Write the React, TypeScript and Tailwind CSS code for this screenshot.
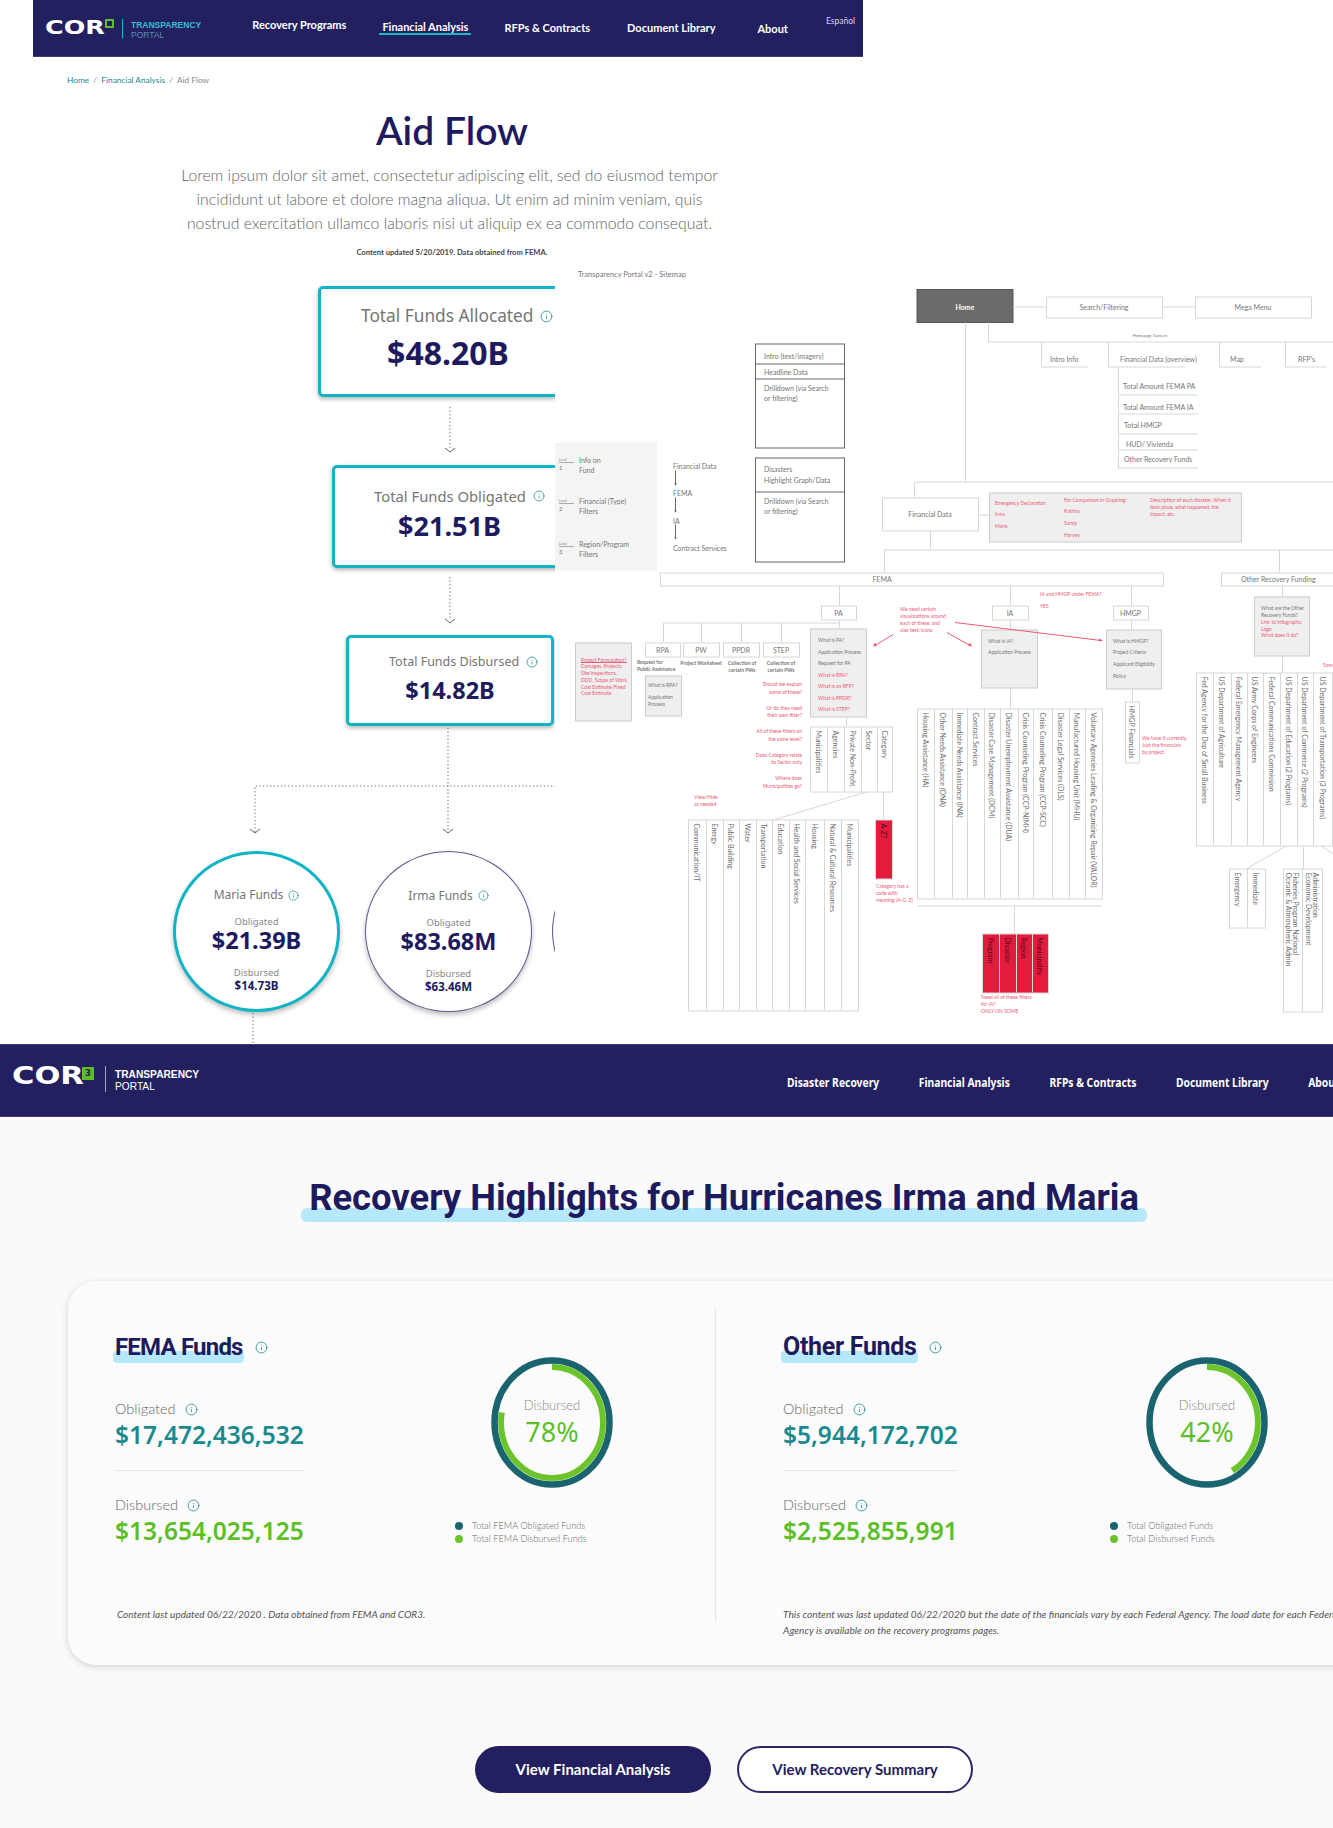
import type { ReactNode } from "react";
import { Info } from "lucide-react";

const LINE = "#d8d8d8";
const TXT = "#757575";
const PINK = "#ea5a76";
const RED = "#e31b3c";

function InfoIcon({ size = 13 }: { size?: number }) {
  return <Info size={size} strokeWidth={1.5} className="shrink-0 text-[#1b8a8f]" />;
}

function Logo({ small }: { small?: boolean }) {
  if (small) {
    return (
      <div className="ml-[12px] flex items-start">
        <span className="mt-[19px] w-[70px] origin-left scale-x-[1.22] font-['DejaVu_Sans'] text-[25px] leading-[24px] font-bold text-white">COR</span>
        <span className="mt-[22px] flex h-[13px] w-[12px] items-center justify-center bg-[#5cbf28] font-['DejaVu_Sans'] text-[9px] font-bold text-[#23205f]">3</span>
        <span className="mt-[21px] ml-[11px] h-[26px] w-px bg-white/60" />
        <span className="mt-[24px] ml-[9px] font-['Liberation_Sans'] text-[10.2px] leading-[12px] text-white">
          <b className="font-semibold">TRANSPARENCY</b>
          <br />
          <span className="font-light">PORTAL</span>
        </span>
      </div>
    );
  }
  return (
    <div className="ml-[12px] flex items-start">
      <span className="mt-[17px] w-[58px] origin-left scale-x-[1.27] font-['DejaVu_Sans'] text-[20px] leading-[20px] font-bold text-white">COR</span>
      <span className="mt-[19px] ml-[2px] h-[9px] w-[9px] border-2 border-[#5cbf28]" />
      <span className="mt-[19px] ml-[8px] h-[19px] w-px bg-[#1fb7c6]" />
      <span className="mt-[20px] ml-[8px] font-['Liberation_Sans'] text-[8.5px] leading-[10px] text-[#35c0d0]">
        <b className="font-bold">TRANSPARENCY</b>
        <br />
        <span className="font-light text-[#5b8fb0]">PORTAL</span>
      </span>
    </div>
  );
}

function TopHeader() {
  return (
    <header className="relative ml-[33px] flex h-[57px] w-[830px] border-b border-[#3f3c78] bg-[#23205f] font-['Lato',sans-serif] text-[11px] font-bold whitespace-nowrap text-white">
      <Logo />
      <nav className="flex">
        <a className="mt-[17px] ml-[51px]">Recovery Programs</a>
        <a className="mt-[19px] ml-[33px] h-[16px] border-b-2 border-[#1fb7c6] px-[3px]">Financial Analysis</a>
        <a className="mt-[20px] ml-[33px]">RFPs &amp; Contracts</a>
        <a className="mt-[20px] ml-[37px]">Document Library</a>
        <a className="mt-[21px] ml-[42px]">About</a>
        <a className="mt-[15px] ml-[38px] text-[8.5px] font-normal text-[#d5d5e4]">Español</a>
      </nav>
    </header>
  );
}

function Intro() {
  return (
    <div className="ml-[33px] h-[205px] w-[838px] pt-[17px] font-['Lato',sans-serif]">
      <p className="ml-[34px] h-[12px] text-[8.3px] leading-[12px] text-[#1b8a8f]">
        Home <span className="text-[#999]">&nbsp;/&nbsp;</span> Financial Analysis <span className="text-[#999]">&nbsp;/&nbsp;</span> <span className="text-[#888]">Aid Flow</span>
      </p>
      <h1 className="mt-[20px] text-center text-[39px] leading-[48px] font-semibold text-[#1e1a5e]">Aid Flow</h1>
      <p className="mt-[9px] pr-[5px] text-center text-[15.8px] leading-[24px] font-light text-[#5f5f5f]">
        Lorem ipsum dolor sit amet, consectetur adipiscing elit, sed do eiusmod tempor
        <br />
        incididunt ut labore et dolore magna aliqua. Ut enim ad minim veniam, quis
        <br />
        nostrud exercitation ullamco laboris nisi ut aliquip ex ea commodo consequat.
      </p>
      <p className="mt-[11px] text-center text-[7.6px] leading-[12px] font-bold text-[#444]">Content updated 5/20/2019. Data obtained from FEMA.</p>
    </div>
  );
}

function Dotted({ h, x }: { h: number; x: number }) {
  // dotted connector with the little chevron on the end
  return (
    <svg width="555" height={h} className="block shrink-0">
      <line x1={x} y1="0" x2={x} y2={h - 5} stroke="#666" strokeWidth="1" strokeDasharray="1.2 2.4" />
      <path d={`M${x - 5} ${h - 5}L${x} ${h - 1}L${x + 5} ${h - 5}`} fill="none" stroke="#666" strokeWidth="1" />
    </svg>
  );
}

function Branch() {
  return (
    <svg width="555" height="123" className="block shrink-0">
      <g fill="none" stroke="#666" strokeWidth="1">
        <path d="M448 0V104M255 104V58H555" strokeDasharray="1.2 2.4" />
        <path d="M443 101L448 105L453 101M250 101L255 105L260 101" />
      </g>
    </svg>
  );
}

function FundCard({ title, value, box, titleCls, valueCls, row, icon }: { title: string; value: string; box: string; titleCls: string; valueCls: string; row: string; icon: number }) {
  return (
    <div className={`flex shrink-0 flex-col rounded-[5px] border-[3px] border-[#0fb5c4] bg-white shadow-[0_2px_4px_rgba(0,0,0,0.3)] ${box}`}>
      <div className={`flex items-center gap-[7px] ${row}`}>
        <span className={`font-['Noto_Sans',sans-serif] whitespace-nowrap text-[#757575] ${titleCls}`}>{title}</span>
        <InfoIcon size={icon} />
      </div>
      <div className={`text-center font-['Noto_Sans',sans-serif] font-bold text-[#1e1a5e] ${valueCls}`}>{value}</div>
    </div>
  );
}

function Circle({ name, ob, dis, ring }: { name: string; ob: string; dis: string; ring: string }) {
  return (
    <div className={`flex h-[161px] w-[167px] shrink-0 flex-col items-center rounded-[50%] bg-white font-['Noto_Sans',sans-serif] shadow-[0_3px_5px_rgba(0,0,0,0.25)] ${ring}`}>
      <div className="flex h-[16px] items-center gap-[5px] text-[12px] leading-[16px] text-[#757575]">
        {name} <InfoIcon size={11} />
      </div>
      <div className="mt-[13px] text-[9.5px] leading-[12px] text-[#888]">Obligated</div>
      <div className="text-[23.5px] leading-[24px] font-bold text-[#1e1a5e]">{ob}</div>
      <div className="mt-[15px] text-[9.5px] leading-[12px] text-[#888]">Disbursed</div>
      <div className="text-[11.5px] leading-[13px] font-bold text-[#1e1a5e]">{dis}</div>
    </div>
  );
}

function AidFlow() {
  return (
    <div className="flex h-[782px] w-[555px] shrink-0 flex-col overflow-hidden pt-[24px]">
      <FundCard title="Total Funds Allocated" value="$48.20B" box="ml-[318px] h-[111px] w-[264px]" row="mt-[15px] ml-[40px]" titleCls="text-[17.3px] leading-[24px]" valueCls="mt-[5px] pr-[4px] text-[32px] leading-[40px]" icon={13} />
      <div className="h-[10px] shrink-0" />
      <Dotted h={46} x={450} />
      <div className="h-[12px] shrink-0" />
      <FundCard title="Total Funds Obligated" value="$21.51B" box="ml-[332px] h-[103px] w-[236px]" row="mt-[17px] ml-[39px]" titleCls="text-[14.8px] leading-[22px]" valueCls="mt-[2px] pr-[1px] text-[27px] leading-[34px]" icon={12} />
      <div className="h-[9px] shrink-0" />
      <Dotted h={47} x={450} />
      <div className="h-[11px] shrink-0" />
      <FundCard title="Total Funds Disbursed" value="$14.82B" box="ml-[346px] h-[91px] w-[208px]" row="mt-[15px] ml-[40px]" titleCls="text-[12.5px] leading-[18px]" valueCls="mt-[4px] text-[23.5px] leading-[30px]" icon={12} />
      <div className="h-[2px] shrink-0" />
      <Branch />
      <div className="ml-[173px] flex gap-[25px]">
        <Circle name="Maria Funds" ob="$21.39B" dis="$14.73B" ring="border-[3.5px] border-[#0fb5c4] pt-[33px]" />
        <Circle name="Irma Funds" ob="$83.68M" dis="$63.46M" ring="border border-[#5a5590] pt-[35.5px]" />
        <div className="ml-[-5px] h-[161px] w-[167px] shrink-0 rounded-[50%] border border-[#5a5590]" />
      </div>
      <svg width="555" height="32" className="block shrink-0">
        <line x1="253" y1="1" x2="253" y2="32" stroke="#666" strokeDasharray="1.2 2.4" />
      </svg>
    </div>
  );
}

/* sitemap drawing helpers, all in page coordinates */
function T({ x, y, s = 7, c = TXT, a, w, children }: { x: number; y: number; s?: number; c?: string; a?: "middle" | "end"; w?: number; children: string }) {
  return (
    <text x={x} y={y} fontSize={s} fill={c} textAnchor={a} fontWeight={w} dominantBaseline="central">
      {children}
    </text>
  );
}

function L({ d, c = LINE }: { d: string; c?: string }) {
  return <path d={d} fill="none" stroke={c} strokeWidth="1" />;
}

function Box({ x, y, x2, y2, fill = "#fff", c = LINE }: { x: number; y: number; x2: number; y2: number; fill?: string; c?: string }) {
  return <rect x={x + 0.5} y={y + 0.5} width={x2 - x} height={y2 - y} fill={fill} stroke={c} strokeWidth="1" />;
}

function Lines({ x, ys, c = TXT, s = 5, w }: { x: number; ys: [number, string][]; c?: string; s?: number; w?: number }) {
  return (
    <>
      {ys.map(([y, t]) => (
        <T key={y} x={x} y={y} s={s} c={c} w={w}>
          {t}
        </T>
      ))}
    </>
  );
}

function VTable({ cols, y, y2, items, fill = "#fff", c = "#6e6e6e", s = 7 }: { cols: number[]; y: number; y2: number; items: (string | string[])[]; fill?: string; c?: string; s?: number }) {
  return (
    <g>
      <Box x={cols[0]} y={y} x2={cols[cols.length - 1]} y2={y2} fill={fill} />
      {cols.slice(1, -1).map((cx) => (
        <L key={cx} d={`M${cx + 0.5} ${y}V${y2}`} />
      ))}
      {items.map((it, i) => {
        const mid = (cols[i] + cols[i + 1]) / 2;
        const parts = Array.isArray(it) ? it : [it];
        return parts.map((t, k) => {
          const cx = mid + (k - (parts.length - 1) / 2) * 7;
          return (
            <text key={t} x={cx} y={y + 4} fontSize={s} fill={c} dominantBaseline="central" transform={`rotate(90 ${cx} ${y + 4})`}>
              {t}
            </text>
          );
        });
      })}
    </g>
  );
}

function CenterBox({ x, y, x2, y2, t, s = 7 }: { x: number; y: number; x2: number; y2: number; t: string; s?: number }) {
  return (
    <g>
      <Box x={x} y={y} x2={x2} y2={y2} />
      <T x={(x + x2) / 2} y={(y + y2) / 2} a="middle" s={s}>
        {t}
      </T>
    </g>
  );
}

function Sitemap() {
  return (
    <svg viewBox="555 261.5 778 782" width="778" height="782" className="block shrink-0 bg-white font-['Lato',sans-serif]">
      <T x={578} y={274} s={7.5}>Transparency Portal v2 - Sitemap</T>

      {/* level key */}
      <rect x="555" y="442" width="102" height="128" fill="#f4f4f4" />
      {[
        [459, "1", "Info on", "Fund"],
        [500, "2", "Financial (Type)", "Filters"],
        [543, "3", "Region/Program", "Filters"],
      ].map(([y, n, a, b]) => (
        <g key={n as string}>
          <T x={559} y={y as number} s={3.5}>Level</T>
          <L d={`M559 ${(y as number) + 3}H574`} c="#aaa" />
          <T x={559} y={(y as number) + 8} s={6}>{n as string}</T>
          <T x={579} y={y as number}>{a as string}</T>
          <T x={579} y={(y as number) + 10}>{b as string}</T>
        </g>
      ))}

      {/* flow list */}
      <T x={673} y={465}>Financial Data</T>
      <T x={673} y={492}>FEMA</T>
      <T x={673} y={520}>IA</T>
      <T x={673} y={547}>Contract Services</T>
      {[470, 497, 524].map((y) => (
        <g key={y}>
          <L d={`M675.5 ${y}V${y + 14}`} c="#666" />
          <path d={`M674 ${y + 13}h3l-1.5 2z`} fill="#666" />
        </g>
      ))}

      {/* wire boxes */}
      <Box x={755} y={343} x2={844} y2={447} c="#666" />
      <L d="M755 363.5H844M755 378.5H844" c="#666" />
      <Lines x={764} s={7} ys={[[355, "Intro (text/imagery)"], [371, "Headline Data"], [387, "Drilldown (via Search"], [397, "or filtering)"]]} />
      <Box x={755} y={457} x2={844} y2={561} c="#666" />
      <L d="M755 491.5H844" c="#666" />
      <Lines x={764} s={7} ys={[[468, "Disasters"], [479, "Highlight Graph/Data"], [500, "Drilldown (via Search"], [510, "or filtering)"]]} />

      {/* home row */}
      <rect x="917" y="289" width="96" height="33" fill="#6b6b6b" stroke="#555" />
      <T x={965} y={306} a="middle" c="#fff" w={700}>Home</T>
      <L d="M1013 306.5H1046M1162 306.5H1195M965.5 322V481M914.5 497V481.5H1333M988.5 322V341.5H1333" />
      <CenterBox x={1046} y={296} x2={1162} y2={317} t="Search/Filtering" />
      <CenterBox x={1195} y={296} x2={1311} y2={317} t="Mega Menu" />
      <T x={1150} y={335} a="middle" s={4}>Homepage Content</T>

      <L d="M1041.5 341V366.5H1088M1108.5 341V366.5H1185M1219.5 341V366.5H1261M1285.5 341V366.5H1327" />
      <T x={1050} y={358}>Intro Info</T>
      <T x={1120} y={358}>Financial Data (overview)</T>
      <T x={1230} y={358}>Map</T>
      <T x={1298} y={358}>RFP's</T>
      <L d="M1118.5 366V467.5H1198M1118 394.5H1198M1118 413.5H1198M1118 433.5H1198M1118 449.5H1198" />
      <T x={1123} y={385}>Total Amount FEMA PA</T>
      <T x={1123} y={406}>Total Amount FEMA IA</T>
      <T x={1124} y={424}>Total HMGP</T>
      <T x={1126} y={443}>HUD/ Vivienda</T>
      <T x={1124} y={458}>Other Recovery Funds</T>

      {/* financial data */}
      <CenterBox x={882} y={497} x2={978} y2={530} t="Financial Data" />
      <L d="M978 514.5H989M930.5 530V549.5M884.5 572V549.5H1333M1279.5 549V572" />
      <Box x={989} y={492} x2={1241} y2={541} fill="#efefef" c="#ccc" />
      <Lines x={995} c={PINK} ys={[[502, "Emergency Declaration"], [513, "Irma"], [525, "Maria"]]} />
      <Lines x={1064} c={PINK} ys={[[499, "For Comparison in Graphing:"], [510, "Katrina"], [522, "Sandy"], [534, "Harvey"]]} />
      <Lines x={1150} c={PINK} ys={[[499, "Description of each disaster, When it"], [506, "took place, what happened, the"], [513, "impact, etc."]]} />

      {/* FEMA */}
      <Box x={660} y={572} x2={1163} y2={585} />
      <T x={882} y={578} a="middle">FEMA</T>
      <Box x={1221} y={572} x2={1345} y2={585} />
      <T x={1241} y={578}>Other Recovery Funding</T>

      {/* PA */}
      <L d="M839.5 585V628M663.5 642V622.5H839M701.5 622V642M741.5 622V642M781.5 622V642" />
      <CenterBox x={821} y={605} x2={856} y2={619} t="PA" />
      <CenterBox x={645} y={642} x2={680} y2={656} t="RPA" />
      <CenterBox x={683} y={642} x2={719} y2={656} t="PW" />
      <CenterBox x={723} y={642} x2={759} y2={656} t="PPDR" />
      <CenterBox x={763} y={642} x2={799} y2={656} t="STEP" />
      <Lines x={637} s={5} w={700} ys={[[661, "Request for"], [668, "Public Assistance"]]} />
      <T x={701} y={662} s={5} a="middle" w={700}>Project Worksheet</T>
      <T x={742} y={662} s={5} a="middle" w={700}>Collection of</T>
      <T x={742} y={669} s={5} a="middle" w={700}>certain PWs</T>
      <T x={781} y={662} s={5} a="middle" w={700}>Collection of</T>
      <T x={781} y={669} s={5} a="middle" w={700}>certain PWs</T>
      <Box x={645} y={675} x2={681} y2={715} fill="#efefef" c="#ccc" />
      <Lines x={648} ys={[[684, "What is RPA?"], [696, "Application"], [703, "Process"]]} />
      <Box x={575} y={642} x2={631} y2={720} fill="#efefef" c="#ccc" />
      <Lines x={581} c={PINK} ys={[[659, "Project Formulation?"], [665, "Damages, Projects,"], [672, "Site Inspections,"], [679, "DDD, Scope of Work,"], [686, "Cost Estimate/Fixed"], [692, "Cost Estimate"]]} />
      <L d="M581 662H627" c={PINK} />
      <Box x={810} y={628} x2={866} y2={716} fill="#efefef" c="#ccc" />
      <Lines x={818} ys={[[639, "What is PA?"], [651, "Application Process"], [662, "Request for PA"]]} />
      <Lines x={818} c={PINK} ys={[[674, "What is RPA?"], [685, "What is an RFP?"], [697, "What is PPDR?"], [708, "What is STEP?"]]} />
      {[
        [683, "Should we explain"], [691, "some of these?"], [707, "Or do they need"], [714, "their own filter?"], [730, "All of these filters on"],
        [738, "the same level?"], [754, "Does Category relate"], [761, "to Sector only"], [777, "Where does"], [785, "Municipalities go?"],
      ].map(([y, t]) => (
        <T key={y as number} x={802} y={y as number} s={5} c={PINK} a="end">{t as string}</T>
      ))}
      <L d="M846.5 716V726M868 791L775 819M883.5 791V819" />
      <VTable cols={[810, 827, 844, 861, 877, 892]} y={726} y2={791} items={["Municipalities", "Agencies", "Private Non-Profit", "Sector", "Category"]} />
      <VTable cols={[688, 706, 723, 739, 756, 772, 789, 805, 824, 841, 858]} y={819} y2={1010} items={["Communication/IT", "Energy", "Public Building", "Water", "Transportation", "Education", "Health and Social Services", "Housing", "Natural & Cultural Resources", "Municipalities"]} />
      <VTable cols={[875, 892]} y={819} y2={878} fill={RED} c="#4a0d1a" items={["A-Z?"]} />
      <Lines x={876} c={PINK} ys={[[885, "Category has a"], [892, "code with"], [899, "meaning (A-G, Z)"]]} />
      <Lines x={694} c={PINK} ys={[[796, "View/Hide"], [803, "as needed"]]} />
      <Lines x={900} c={PINK} ys={[[608, "We need certain"], [615, "visualizations around"], [622, "each of these, and"], [629, "also text/icons."]]} />

      {/* IA */}
      <L d="M1010.5 585V708M1014.5 905V933M918 905.5H1102" />
      <CenterBox x={992} y={605} x2={1028} y2={619} t="IA" />
      <Box x={981} y={629} x2={1037} y2={687} fill="#efefef" c="#ccc" />
      <Lines x={988} ys={[[640, "What is IA?"], [651, "Application Process"]]} />
      <Lines x={1040} c={PINK} ys={[[593, "IA and HMGP under FEMA?"], [605, "YES"]]} />
      <VTable cols={[917, 934, 952, 967, 984, 1000, 1018, 1033, 1052, 1069, 1085, 1102]} y={708} y2={898} items={["Housing Assistance (HA)", "Other Needs Assistance (ONA)", "Immediate Needs Assistance (INA)", "Contract Services", "Disaster Case Management (DCM)", "Disaster Unemployment Assistance (DUA)", "Crisis Counseling Program (CCP-NIMH)", "Crisis Counseling Program (CCP-SCC)", "Disaster Legal Services (DLS)", "Manufactured Housing Unit (MHU)", "Voluntary Agencies Leading & Organizing Repair (VALOR)"]} />
      <VTable cols={[982, 999, 1016, 1032, 1048]} y={933} y2={992} fill={RED} c="#4a0d1a" items={["Program", "Disaster", "Region", "Municipality"]} />
      <Lines x={981} c={PINK} ys={[[996, "Need all of these filters"], [1003, "for IA?"], [1010, "ONLY ON SOME"]]} />

      {/* HMGP */}
      <L d="M1131.5 585V629M1132.5 688V701" />
      <CenterBox x={1113} y={605} x2={1148} y2={619} t="HMGP" />
      <Box x={1106} y={629} x2={1161} y2={688} fill="#efefef" c="#ccc" />
      <Lines x={1113} ys={[[640, "What is HMGP?"], [651, "Project Criteria"], [663, "Applicant Eligibility"], [675, "Policy"]]} />
      <VTable cols={[1125, 1139]} y={701} y2={762} items={["HMGP Financials"]} />
      <Lines x={1142} c={PINK} ys={[[737, "We have it currently."], [744, "Just the financials"], [751, "by project."]]} />

      {/* other recovery */}
      <L d="M1282.5 585V596M1282.5 655V672M1287 845L1247 868M1303.5 845V868M1320 845L1333 853" />
      <Box x={1254} y={596} x2={1309} y2={655} fill="#efefef" c="#ccc" />
      <Lines x={1261} ys={[[607, "What are the Other"], [614, "Recovery Funds?"]]} />
      <Lines x={1261} c={PINK} ys={[[621, "Link to Infographic"], [628, "Logo"], [634, "What does it do?"]]} />
      <T x={1323} y={664} s={5} c={PINK}>Some</T>
      <VTable cols={[1196, 1213, 1231, 1247, 1263, 1280, 1297, 1313, 1332, 1349]} y={672} y2={845} items={["Fed Agency for the Dep of Small Business", "US Department of Agriculture", "Federal Emergency Management Agency", "US Army Corps of Engineers", "Federal Communications Commission", "US Department of Education (2 Programs)", "US Department of Commerce (2 Programs)", "US Department of Transportation (3 Programs)", "Spacer"]} />
      <VTable cols={[1229, 1247, 1265]} y={868} y2={927} items={["Emergency", "Immediate"]} />
      <VTable cols={[1283, 1302, 1322]} y={868} y2={1011} items={[["Oceanic & Atmospheric Admin", "Fisheries Program National"], ["Economic Development", "Administration"]]} />

      {/* pink arrows lie over the boxes */}
      <L d="M893 634L875 645M947 632L970 645M955 622L1101 640" c={PINK} />
      <path d="M873 646l4-1l-2-3zM972 646l-4-1l2-3zM1103 640l-4-2l0 3z" fill={PINK} />
    </svg>
  );
}

function BottomHeader() {
  return (
    <header className="flex h-[73px] w-[1448px] border-y border-[#3f3c78] bg-[#23205f]">
      <Logo small />
      <nav className="mt-[30px] ml-[588px] flex origin-left scale-x-[0.86] gap-[46px] font-['Noto_Sans',sans-serif] text-[12px] leading-[16px] font-bold whitespace-nowrap text-white">
        <a>Disaster Recovery</a>
        <a>Financial Analysis</a>
        <a>RFPs &amp; Contracts</a>
        <a>Document Library</a>
        <a>About</a>
      </nav>
    </header>
  );
}

function Donut({ pct }: { pct: number }) {
  return (
    <div className="relative h-[131px] w-[122px] shrink-0">
      <svg width="122" height="131" viewBox="0 0 122 131" className="block">
        <ellipse cx="61" cy="65.5" rx="57.5" ry="62" fill="none" stroke="#1a6470" strokeWidth="6.5" />
        <path d="M61 10A51 55.5 0 1 1 61 121A51 55.5 0 1 1 61 10" pathLength={100} strokeDasharray={`${pct} 100`} fill="none" stroke="#6cc42c" strokeWidth="6" />
      </svg>
      <div className="absolute inset-0 flex flex-col items-center pt-[39px]">
        <span className="font-['Lato',sans-serif] text-[13px] leading-[18px] font-light text-[#888]">Disbursed</span>
        <span className="font-['Noto_Sans',sans-serif] text-[27px] leading-[36px] text-[#5cbf28]">{pct}%</span>
      </div>
    </div>
  );
}

function Stat({ label, value, color }: { label: string; value: string; color: string }) {
  return (
    <>
      <div className="flex h-[24px] items-center gap-[9px] font-['Lato',sans-serif] text-[14.5px] font-light text-[#666]">
        {label}
        <InfoIcon size={13} />
      </div>
      <div className={`mt-[-2px] font-['Noto_Sans',sans-serif] text-[24.5px] leading-[32px] font-semibold whitespace-nowrap ${color}`}>{value}</div>
    </>
  );
}

function FundsPanel({ title, titleCls, ob, dis, pct, leftW, legend, legendMl, donutMl, note, noteCls, panel }: { title: string; titleCls: string; ob: string; dis: string; pct: number; leftW: string; legend: string[]; legendMl: string; donutMl: string; note: ReactNode; noteCls: string; panel: string }) {
  return (
    <section className={`shrink-0 pt-[48px] ${panel}`}>
      <div className="flex h-[264px]">
        <div className={`shrink-0 ${leftW}`}>
          <div className={`flex h-[36px] items-center gap-[12px] font-['Roboto',sans-serif] leading-[36px] font-bold whitespace-nowrap text-[#1e1a5e] ${titleCls}`}>
            <span className="relative inline-block">
              <span className="absolute top-[22px] right-[-1px] left-[-2px] h-[12px] rounded-[4px] bg-[#b5e8fa]" />
              <span className="relative">{title}</span>
            </span>
            <InfoIcon size={13} />
          </div>
          <div className="h-[32px]" />
          <Stat label="Obligated" value={ob} color="text-[#1b8a8f]" />
          <div className="mt-[19px] h-[1px] bg-[#e4e4e4]" />
          <div className="h-[22px]" />
          <Stat label="Disbursed" value={dis} color="text-[#5cbf28]" />
        </div>
        <div className="mt-[28px] flex flex-col">
          <div className={donutMl}>
            <Donut pct={pct} />
          </div>
          <ul className={`mt-[31px] font-['Lato',sans-serif] text-[9.2px] leading-[13px] font-light whitespace-nowrap text-[#666] ${legendMl}`}>
            <li className="flex items-center gap-[9px]">
              <span className="h-[8px] w-[8px] rounded-full bg-[#1a6470]" />
              {legend[0]}
            </li>
            <li className="flex items-center gap-[9px]">
              <span className="h-[8px] w-[8px] rounded-full bg-[#6cc42c]" />
              {legend[1]}
            </li>
          </ul>
        </div>
      </div>
      <p className={`mt-[13px] font-['Lato',sans-serif] leading-[16px] whitespace-nowrap text-[#555] italic ${noteCls}`}>{note}</p>
    </section>
  );
}

function Highlights() {
  return (
    <main className="h-[711px] w-[1448px] bg-[#fafafa] pt-[57px]">
      <div className="text-center">
        <h2 className="relative inline-block h-[48px] w-[846px] font-['Roboto',sans-serif] text-[36.4px] leading-[48px] font-bold whitespace-nowrap text-[#1e1a5e]">
          <span className="absolute inset-x-0 top-[34px] h-[14px] rounded-[6px] bg-[#b5e8fa]" />
          <span className="relative">Recovery Highlights for Hurricanes Irma and Maria</span>
        </h2>
      </div>
      <div className="mt-[59px] ml-[68px] flex h-[384px] w-[1312px] rounded-[28px] bg-[#fbfbfb] shadow-[0_2px_7px_rgba(0,0,0,0.16)]">
        <FundsPanel
          panel="w-[647px] pl-[47px]"
          title="FEMA Funds"
          titleCls="text-[24px] tracking-[-0.8px]"
          ob="$17,472,436,532"
          dis="$13,654,025,125"
          pct={78}
          leftW="w-[189px]"
          donutMl="ml-[187px]"
          legend={["Total FEMA Obligated Funds", "Total FEMA Disbursed Funds"]}
          legendMl="ml-[151px]"
          noteCls="text-[10px]"
          note={<span className="ml-[2px]">Content last updated 06/22/2020 . Data obtained from FEMA and COR3.</span>}
        />
        <div className="mt-[27px] h-[314px] w-px shrink-0 bg-[#e4e4e4]" />
        <FundsPanel
          panel="w-[600px] pl-[67px]"
          title="Other Funds"
          titleCls="text-[25px] tracking-[-0.3px]"
          ob="$5,944,172,702"
          dis="$2,525,855,991"
          pct={42}
          leftW="w-[174px]"
          donutMl="ml-[189px]"
          legend={["Total Obligated Funds", "Total Disbursed Funds"]}
          legendMl="ml-[153px]"
          noteCls="text-[10.15px]"
          note={
            <>
              This content was last updated 06/22/2020 but the date of the financials vary by each Federal Agency. The load date for each Federal
              <br />
              Agency is available on the recovery programs pages.
            </>
          }
        />
      </div>
      <div className="mt-[81px] flex justify-center gap-[26px] font-['Lato',sans-serif] text-[15px] font-bold">
        <a className="flex h-[47px] w-[236px] items-center justify-center rounded-full bg-[#23205f] text-white">View Financial Analysis</a>
        <a className="flex h-[47px] w-[236px] items-center justify-center rounded-full border-2 border-[#2c2968] bg-white text-[#23205f]">View Recovery Summary</a>
      </div>
    </main>
  );
}

export default function App() {
  return (
    <div className="h-[1828px] w-[1333px] overflow-hidden bg-white">
      <TopHeader />
      <Intro />
      <div className="flex h-[782px]">
        <AidFlow />
        <Sitemap />
      </div>
      <BottomHeader />
      <Highlights />
    </div>
  );
}
